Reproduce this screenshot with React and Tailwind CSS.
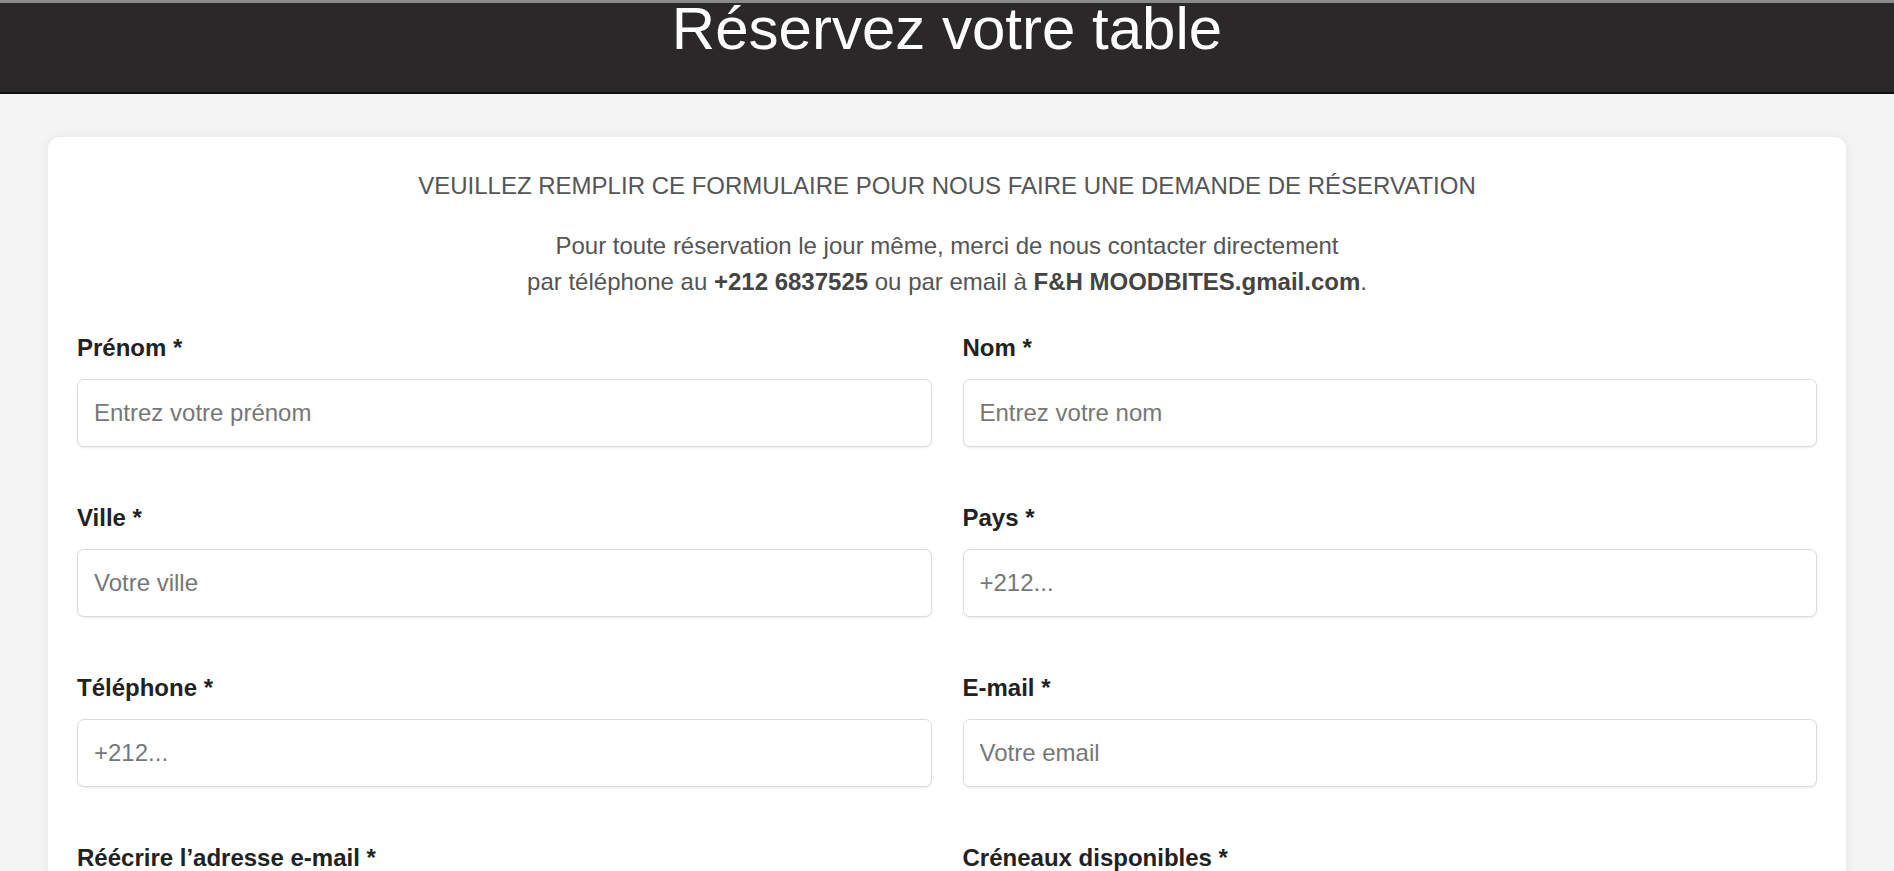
import React from 'react'

const fields = [
  { label: 'Prénom *', placeholder: 'Entrez votre prénom' },
  { label: 'Nom *', placeholder: 'Entrez votre nom' },
  { label: 'Ville *', placeholder: 'Votre ville' },
  { label: 'Pays *', placeholder: '+212...' },
  { label: 'Téléphone *', placeholder: '+212...' },
  { label: 'E-mail *', placeholder: 'Votre email' },
  { label: 'Réécrire l’adresse e-mail *', placeholder: '' },
  { label: 'Créneaux disponibles *', placeholder: '' },
]

const Field = ({ label, placeholder }) => (
  <div className="flex flex-col">
    <label className="text-[24px] leading-[28px] font-bold text-[#222] mb-[17px]">{label}</label>
    <input
      type="text"
      placeholder={placeholder}
      className="h-[68px] w-full rounded-[7px] border border-[#dcdcdc] bg-white px-[16px] text-[24px] text-[#333] placeholder:text-[#777] shadow-[0_1px_2px_rgba(0,0,0,0.08)] outline-none"
    />
  </div>
)

export default function App() {
  return (
    <div className="min-h-screen bg-[#f4f4f4] font-['Liberation_Sans',Arial,sans-serif] overflow-hidden">
      {/* Header */}
      <header className="h-[94px] bg-[#2a2828] border-t-[3px] border-t-[#8a8a8a] border-b-2 border-b-[#111] overflow-hidden">
        <h1 className="text-center text-white text-[60px] leading-none -mt-[4px]">Réservez votre table</h1>
      </header>

      {/* Form card */}
      <div className="mx-[48px] mt-[43px] bg-white rounded-[12px] shadow-[0_0_10px_rgba(0,0,0,0.07)] px-[29px] pt-[35px] pb-10">
        <h2 className="text-center text-[24px] leading-[28px] text-[#555] uppercase">
          Veuillez remplir ce formulaire pour nous faire une demande de réservation
        </h2>
        <p className="mt-[28px] text-center text-[24px] leading-[36px] text-[#555]">
          Pour toute réservation le jour même, merci de nous contacter directement
          <br />
          par téléphone au <strong className="text-[#444]">+212 6837525</strong> ou par email à{' '}
          <strong className="text-[#444]">F&amp;H MOODBITES.gmail.com</strong>.
        </p>

        <div className="mt-[34px] grid grid-cols-2 gap-x-[31px] gap-y-[57px]">
          {fields.map((f) => (
            <Field key={f.label} {...f} />
          ))}
        </div>
      </div>
    </div>
  )
}
